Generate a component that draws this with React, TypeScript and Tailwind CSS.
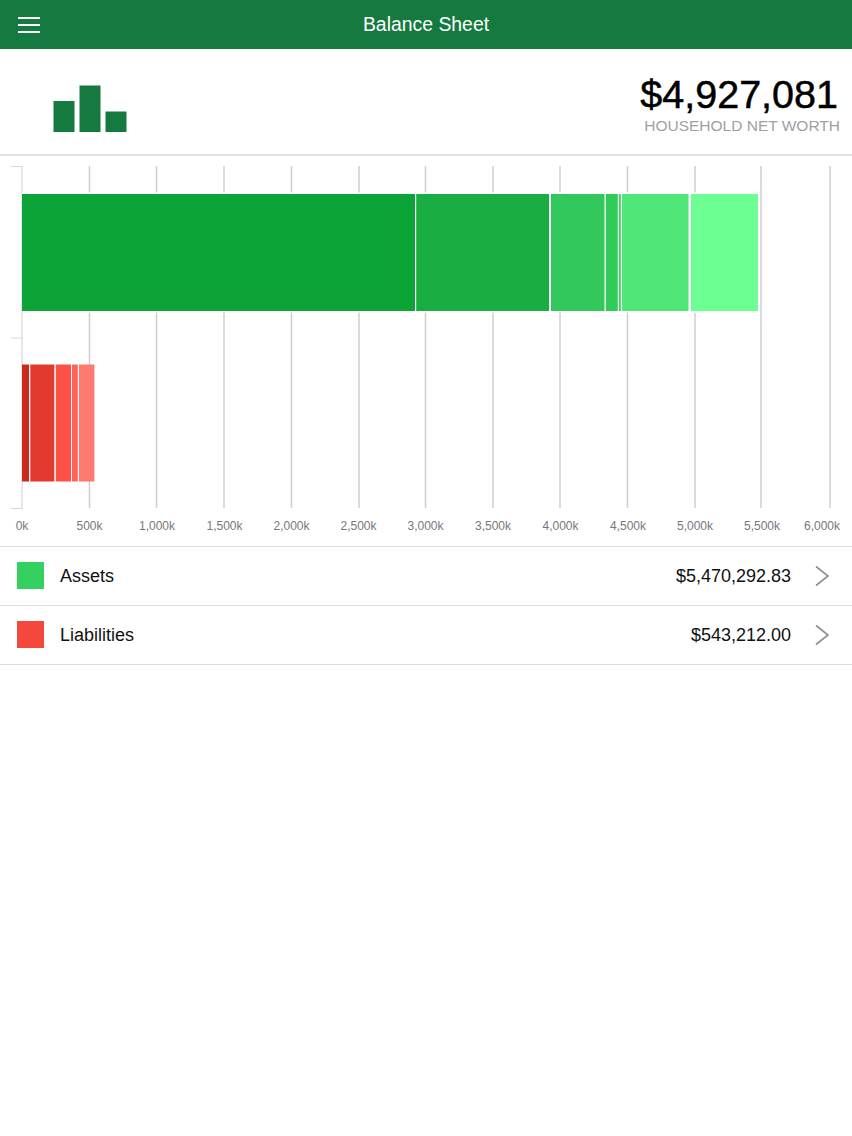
const gridLines = [89.5, 156.5, 224, 291.5, 359, 425.5, 493, 560, 627.5, 695, 761, 830];

const axisLabels = [
  { x: 22, label: "0k" },
  { x: 89.5, label: "500k" },
  { x: 157, label: "1,000k" },
  { x: 224.5, label: "1,500k" },
  { x: 291.5, label: "2,000k" },
  { x: 358.5, label: "2,500k" },
  { x: 425.5, label: "3,000k" },
  { x: 493, label: "3,500k" },
  { x: 560.5, label: "4,000k" },
  { x: 628, label: "4,500k" },
  { x: 695, label: "5,000k" },
  { x: 762, label: "5,500k" },
  { x: 822, label: "6,000k" },
];

const assetBars = [
  { x: 22, w: 393, fill: "#0ca437" },
  { x: 416.2, w: 132.8, fill: "#1aae42" },
  { x: 551, w: 53.5, fill: "#32c85c" },
  { x: 605.8, w: 12, fill: "#31cb5a" },
  { x: 618.8, w: 2, fill: "#3ad363" },
  { x: 622, w: 66.5, fill: "#50e678" },
  { x: 691, w: 67, fill: "#6dff91" },
];

const liabilityBars = [
  { x: 22, w: 7, fill: "#cb2a1c" },
  { x: 30.3, w: 24, fill: "#e23b2e" },
  { x: 55.8, w: 15.2, fill: "#fe5044" },
  { x: 72, w: 5.8, fill: "#fe6459" },
  { x: 79, w: 15.4, fill: "#fe7a70" },
];

function Chart() {
  return (
    <svg width="852" height="390" viewBox="0 156 852 390" className="block">
      {gridLines.map((x) => (
        <line key={x} x1={x} x2={x} y1="166" y2="508" stroke="#cfcfd2" strokeWidth="1.5" />
      ))}
      <path d="M11 166.5H22V508.5H11M11 338H22" fill="none" stroke="#d3d8df" strokeWidth="1.2" />
      <rect x="22" y="192.5" width="737" height="120" fill="#ffffff" />
      {assetBars.map((b) => (
        <rect key={b.x} x={b.x} y="194" width={b.w} height="117" fill={b.fill} />
      ))}
      {liabilityBars.map((b) => (
        <rect key={b.x} x={b.x} y="364.5" width={b.w} height="117" fill={b.fill} />
      ))}
      {axisLabels.map((a) => (
        <text
          key={a.label}
          x={a.x}
          y="530"
          textAnchor="middle"
          fontSize="12"
          fill="#77777b"
          fontFamily="'Liberation Sans', Arial, sans-serif"
        >
          {a.label}
        </text>
      ))}
    </svg>
  );
}

function SummaryRow({ swatch, label, amount }: { swatch: string; label: string; amount: string }) {
  return (
    <div className="flex h-[59px] items-center border-b border-[#dcdcdf] pr-[23px] pl-[17px]">
      <div className={`mb-[1px] h-[27px] w-[27px] ${swatch}`} />
      <span className="ml-4 flex-1 text-[18px] text-[#111]">{label}</span>
      <span className="text-[18px] text-[#111]">{amount}</span>
      <svg width="14" height="22" viewBox="0 0 14 22" className="ml-[24px]">
        <path d="M1 1.5L13 11L1 20.5" fill="none" stroke="#8e8e93" strokeWidth="1.6" />
      </svg>
    </div>
  );
}

export default function App() {
  return (
    <div className="h-[1136px] w-[852px] overflow-hidden bg-white font-['Liberation_Sans',Arial,sans-serif]">
      <header className="relative flex h-[49px] items-center justify-center bg-[#157a3f]">
        <div className="absolute top-[17px] left-[18px] flex w-[22px] flex-col gap-[5px]">
          <div className="h-[2px] bg-white" />
          <div className="h-[2px] bg-white" />
          <div className="h-[2px] bg-white" />
        </div>
        <h1 className="pt-[1px] text-[19.4px] text-white">Balance Sheet</h1>
      </header>

      <section className="flex h-[107px] border-b-2 border-[#e4e4e7]">
        <svg width="130" height="105" viewBox="0 49 130 105" className="block">
          <rect x="53.5" y="101" width="21" height="31" fill="#157a3f" />
          <rect x="79.5" y="85.5" width="21" height="46.5" fill="#157a3f" />
          <rect x="105.5" y="111.5" width="21" height="20.5" fill="#157a3f" />
        </svg>
        <div className="flex flex-1 flex-col items-end pt-[22px] pr-[12px]">
          <div className="mr-[2px] text-[39.5px] leading-[46px] text-black [-webkit-text-stroke:0.5px_black]">
            $4,927,081
          </div>
          <div className="text-[15.5px] leading-[18px] text-[#a0a0a4]">HOUSEHOLD NET WORTH</div>
        </div>
      </section>

      <section className="h-[391px] border-b border-[#dcdcdf]">
        <Chart />
      </section>

      <SummaryRow swatch="bg-[#34d160]" label="Assets" amount="$5,470,292.83" />
      <SummaryRow swatch="bg-[#f4483c]" label="Liabilities" amount="$543,212.00" />
    </div>
  );
}
